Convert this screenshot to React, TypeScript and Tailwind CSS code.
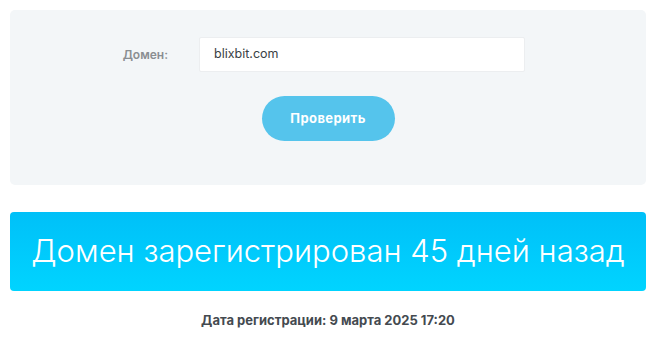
export default function App() {
  return (
    <div className="w-[656px] h-[348px] bg-white px-[10px] pt-[10px]" style={{ fontFamily: "Inter, 'Noto Sans', sans-serif" }}>
      <div className="h-[175px] rounded-[5px] bg-[#f3f6f8] flex flex-col pt-[27px]">
        <div className="flex items-center pl-[90px]">
          <div className="w-[68px] text-right text-[12px] font-semibold text-[#8a8e92]">Домен:</div>
          <div className="ml-[31px] w-[326px] h-[35px] bg-white border border-[#eceef0] rounded-[2px] flex items-center px-[14px] text-[12.5px] text-[#3a3f44]">blixbit.com</div>
        </div>
        <button className="mt-[24px] self-center w-[133px] h-[45px] rounded-full bg-[#55c4ec] text-white text-[13px] font-bold tracking-[0.4px]">Проверить</button>
      </div>
      <div className="mt-[27px] h-[79px] rounded-[4px] bg-gradient-to-b from-[#00c0f8] to-[#00d4ff] flex items-center justify-center text-white text-[31px] font-light">
        Домен зарегистрирован 45 дней назад
      </div>
      <div className="mt-[20px] text-center text-[13px] font-bold text-[#444a50]">Дата регистрации: 9 марта 2025 17:20</div>
    </div>
  );
}
